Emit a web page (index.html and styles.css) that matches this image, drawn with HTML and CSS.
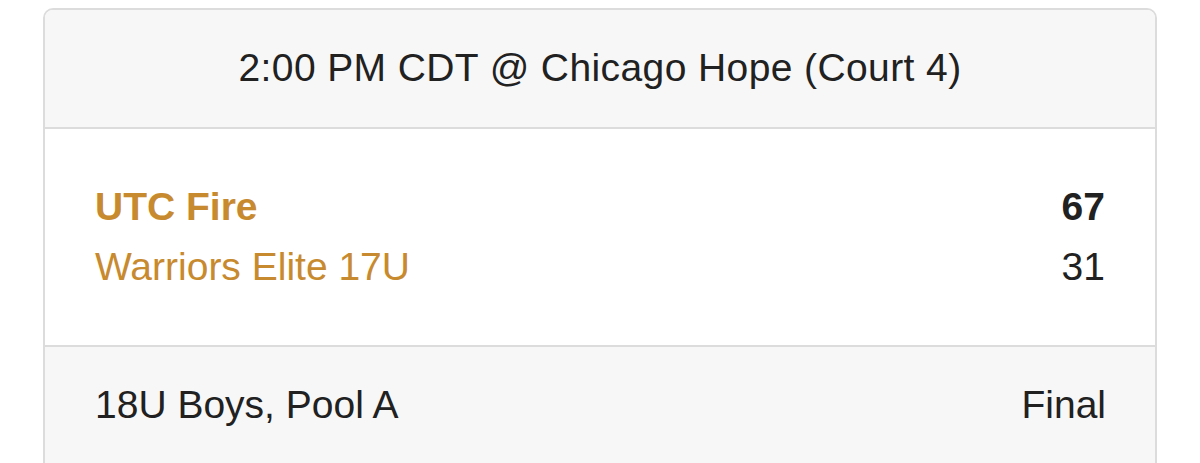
FILE: index.html
```html
<!DOCTYPE html>
<html lang="en">

<head>
  <meta charset="UTF-8" />
  <meta name="viewport" content="width=device-width, initial-scale=1" />
  <title>Game</title>
  <link rel="stylesheet" href="styles.css">
</head>

<body>
  <div class="game-card">
    <div class="game-header">2:00 PM CDT @ Chicago Hope (Court 4)</div>

    <div class="game-body">
      <div class="team-row winner">
        <a class="team-name" href="#">UTC Fire</a>
        <span class="team-score">67</span>
      </div>
      <div class="team-row">
        <a class="team-name" href="#">Warriors Elite 17U</a>
        <span class="team-score">31</span>
      </div>
    </div>

    <div class="game-footer">
      <span>18U Boys, Pool A</span>
      <span>Final</span>
    </div>
  </div>
</body>

</html>
```

FILE: styles.css
```css
body,
html {
  margin: 0;
  padding: 0;
  background: #fff;
  font-family: 'Liberation Sans', Arial, sans-serif;
  font-size: 39px;
  line-height: 1.5;
  color: #212121;
}

.game-card {
  margin: 8px 43px 0 43px;
  border: 2px solid #dcdcdc;
  border-radius: 10px;
  overflow: hidden;
}

.game-header {
  background: #f7f7f7;
  border-bottom: 2px solid #dcdcdc;
  padding: 29px 48px;
  text-align: center;
  letter-spacing: 0.4px;
}

.game-body {
  padding: 48px 50px;
}

.team-row {
  display: flex;
  justify-content: space-between;
  line-height: 60px;
}

.team-name {
  color: #c88a2e;
  text-decoration: none;
}

.winner {
  font-weight: bold;
}

.game-footer {
  background: #f7f7f7;
  border-top: 2px solid #dcdcdc;
  padding: 29px 49px 60px 50px;
  display: flex;
  justify-content: space-between;
}
```
